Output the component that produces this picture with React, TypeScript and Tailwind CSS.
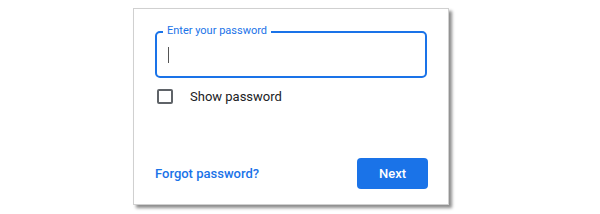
import React from "react";

export default function App() {
  return (
    <div className="w-[600px] h-[214px] bg-white pt-[8px] pl-[133px]" style={{ fontFamily: "Roboto, 'Liberation Sans', sans-serif" }}>
      <div className="w-[316px] h-[197px] bg-white border border-[#d0d0d0] shadow-[3px_3px_3px_rgba(0,0,0,0.45)] pt-[22px] pl-[21px] pr-[20px] flex flex-col">
        <div className="relative h-[47px] w-[272px] border-2 border-[#1a73e8] rounded-[5px]">
          <span className="absolute -top-[9px] left-[6px] bg-white px-[4px] text-[11px] leading-[14px] text-[#1a73e8]">
            Enter your password
          </span>
          <div className="absolute left-[11px] top-[14px] w-[1px] h-[16px] bg-[#555]" />
        </div>
        <div className="flex items-center mt-[10px] h-[17px]">
          <div className="w-[16px] h-[15px] ml-[2px] border-2 border-[#5f6368] rounded-[2px]" />
          <span className="ml-[17px] text-[13px] text-[#202124]">Show password</span>
        </div>
        <div className="flex items-center justify-between mt-[53px]">
          <span className="text-[13px] font-medium text-[#1a73e8]">Forgot password?</span>
          <button className="w-[71px] h-[31px] rounded-[4px] bg-[#1a73e8] text-white text-[13px] font-medium">Next</button>
        </div>
      </div>
    </div>
  );
}
